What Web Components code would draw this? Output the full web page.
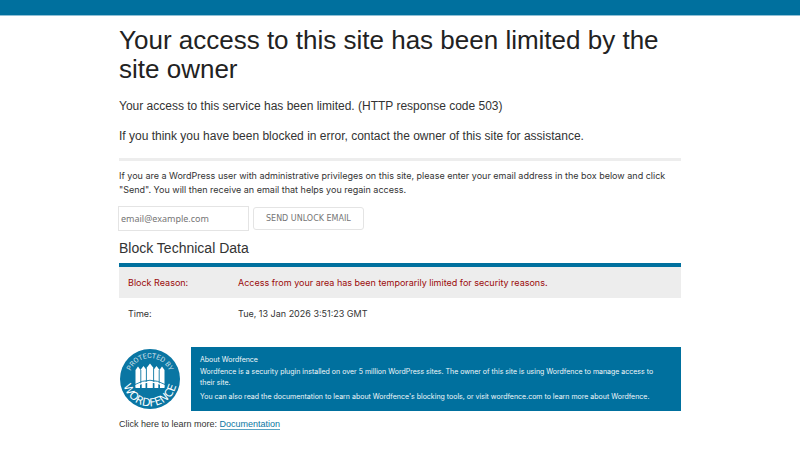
<!DOCTYPE html>
<html lang="en">
<head>
<meta charset="utf-8">
<meta name="viewport" content="width=device-width, initial-scale=1">
<title>Your access to this site has been limited</title>
<style>
body { margin: 0; background: #fff; color: #333; font-family: "Liberation Sans", Arial, sans-serif; font-size: 10px; }
</style>
</head>
<body>
<block-page>
  <page-intro>
    <span slot="title">Your access to this site has been limited by the site owner</span>
    <span slot="status">Your access to this service has been limited. (HTTP response code 503)</span>
    <span slot="advice">If you think you have been blocked in error, contact the owner of this site for assistance.</span>
  </page-intro>
  <unlock-form>If you are a WordPress user with administrative privileges on this site, please enter your email address in the box below and click "Send". You will then receive an email that helps you regain access.</unlock-form>
  <technical-data></technical-data>
  <about-panel></about-panel>
  <learn-more>Click here to learn more:</learn-more>
</block-page>
<script>
function define(name, html) {
  const template = document.createElement('template');
  template.innerHTML = html;
  customElements.define(name, class extends HTMLElement {
    constructor() {
      super();
      this.attachShadow({ mode: 'open' }).append(template.content.cloneNode(true));
    }
  });
}

define('block-page', `
<style>
:host { display: block; }
header { height: 16px; background: #00709e; border-bottom: 1px solid #8fc0d6; box-sizing: border-box; }
main { max-width: 562px; margin: 0 auto; padding: 10px 16px 16px; }
</style>
<header></header>
<main><slot></slot></main>`);

define('page-intro', `
<style>
:host { display: block; border-bottom: 3px solid #ededed; padding-bottom: 13px; }
h1 { margin: 0 0 13px; font-size: 26px; line-height: 29px; font-weight: 400; color: #222; }
p { margin: 0; font-size: 12px; line-height: 18px; }
p + p { margin-top: 12px; }
</style>
<h1><slot name="title"></slot></h1>
<p><slot name="status"></slot></p>
<p><slot name="advice"></slot></p>`);

define('unlock-form', `
<style>
:host { display: block; padding-top: 8px; }
p { margin: 0 0 9px; font-family: Inter, sans-serif; font-size: 9px; line-height: 14px; }
form { display: flex; align-items: center; gap: 4px; margin: 0 0 0 -1px; }
input, button { box-sizing: border-box; font-family: "DejaVu Sans", sans-serif; color: #757575; background: #fff; border: 1px solid #e4e4e4; }
input { width: 131px; height: 25px; padding: 0 2px; font-family: "Noto Sans", sans-serif; font-size: 9px; }
input::placeholder { color: #757575; }
button { height: 23px; padding: 0 12px; font-size: 8px; text-transform: uppercase; border-radius: 3px; }
</style>
<p><slot></slot></p>
<form onsubmit="return false">
  <input type="email" placeholder="email@example.com" aria-label="Email address">
  <button type="submit">Send Unlock Email</button>
</form>`);

define('technical-data', `
<style>
:host { display: block; padding-top: 8px; }
h2 { margin: 0 0 5px; font-size: 14px; line-height: 19px; font-weight: 400; }
table { width: 100%; border-collapse: collapse; border-top: 4px solid #00709e; font-family: Inter, sans-serif; font-size: 9px; line-height: 13px; }
th, td { padding: 9px; text-align: left; font-weight: 400; }
th { width: 92px; }
.reason { background: #ededed; color: #9b0b0b; }
</style>
<h2>Block Technical Data</h2>
<table>
  <tr class="reason"><th scope="row">Block Reason:</th><td>Access from your area has been temporarily limited for security reasons.</td></tr>
  <tr><th scope="row">Time:</th><td>Tue, 13 Jan 2026 3:51:23 GMT</td></tr>
</table>`);

define('about-panel', `
<style>
:host { display: flex; align-items: center; gap: 10px; margin-top: 18px; }
wordfence-badge { flex: none; }
section { flex: 1; padding: 7px 16px 9px 9px; background: #00709e; color: #f0f7fa; font-family: Inter, sans-serif; font-size: 7px; line-height: 11px; }
h3 { margin: 0 0 1px; font-size: inherit; font-weight: 400; }
p { margin: 0; }
p + p { margin-top: 3px; }
</style>
<wordfence-badge></wordfence-badge>
<section>
  <h3>About Wordfence</h3>
  <p>Wordfence is a security plugin installed on over 5 million WordPress sites. The owner of this site is using Wordfence to manage access to their site.</p>
  <p>You can also read the documentation to learn about Wordfence's blocking tools, or visit wordfence.com to learn more about Wordfence.</p>
</section>`);

define('wordfence-badge', `
<style>
:host { display: block; width: 62px; height: 62px; }
svg { display: block; }
text { font-family: Roboto, sans-serif; fill: #fff; text-anchor: middle; }
.name { font-family: "DejaVu Sans", sans-serif; }
</style>
<svg width="62" height="62" viewBox="-31 -31 62 62" role="img" aria-label="Protected by Wordfence">
  <defs>
    <path id="upper" d="M-21 0A21 21 0 0 1 21 0"/>
    <path id="lower" d="M-26 -7A27 27 0 1 0 26 -7"/>
  </defs>
  <circle r="30" fill="#0a76a3"/>
  <text font-size="7" opacity=".8"><textPath href="#upper" startOffset="50%">PROTECTED BY</textPath></text>
  <text class="name" font-size="11"><textPath href="#lower" startOffset="50%">WORDFENCE</textPath></text>
  <path fill="#fff" d="M-14.500 9V-9L-12-12.500-9.500-9-8.800-10-6.500-13-4.200-10-3.500-11 0-15.500 3.500-11 4.200-10 6.500-13 8.800-10 9.500-9 12-12.500 14.500-9V9Z"/>
  <path fill="none" stroke="#0a76a3" stroke-width=".9" d="M-9.200-9V9M-3.600-11V9M3.600-11V9M9.200-9V9M-15 5.500Q0-3 15 5.500"/>
  <path fill="none" stroke="#0a76a3" stroke-width="1.600" d="M-9.200 4V9.500M-3.600 2V9.500M3.600 2V9.500M9.200 4V9.500"/>
  <path fill="none" stroke="#fff" stroke-width="1.300" d="M-14.500 7.200Q0-1 14.500 7.200"/>
</svg>`);

define('learn-more', `
<style>
:host { display: block; margin-top: 7px; font-size: 9px; line-height: 13px; }
a { color: #0a76a3; text-decoration: none; border-bottom: 1px solid #5ba3c2; }
</style>
<slot></slot> <a href="#documentation">Documentation</a>`);
</script>
</body>
</html>
